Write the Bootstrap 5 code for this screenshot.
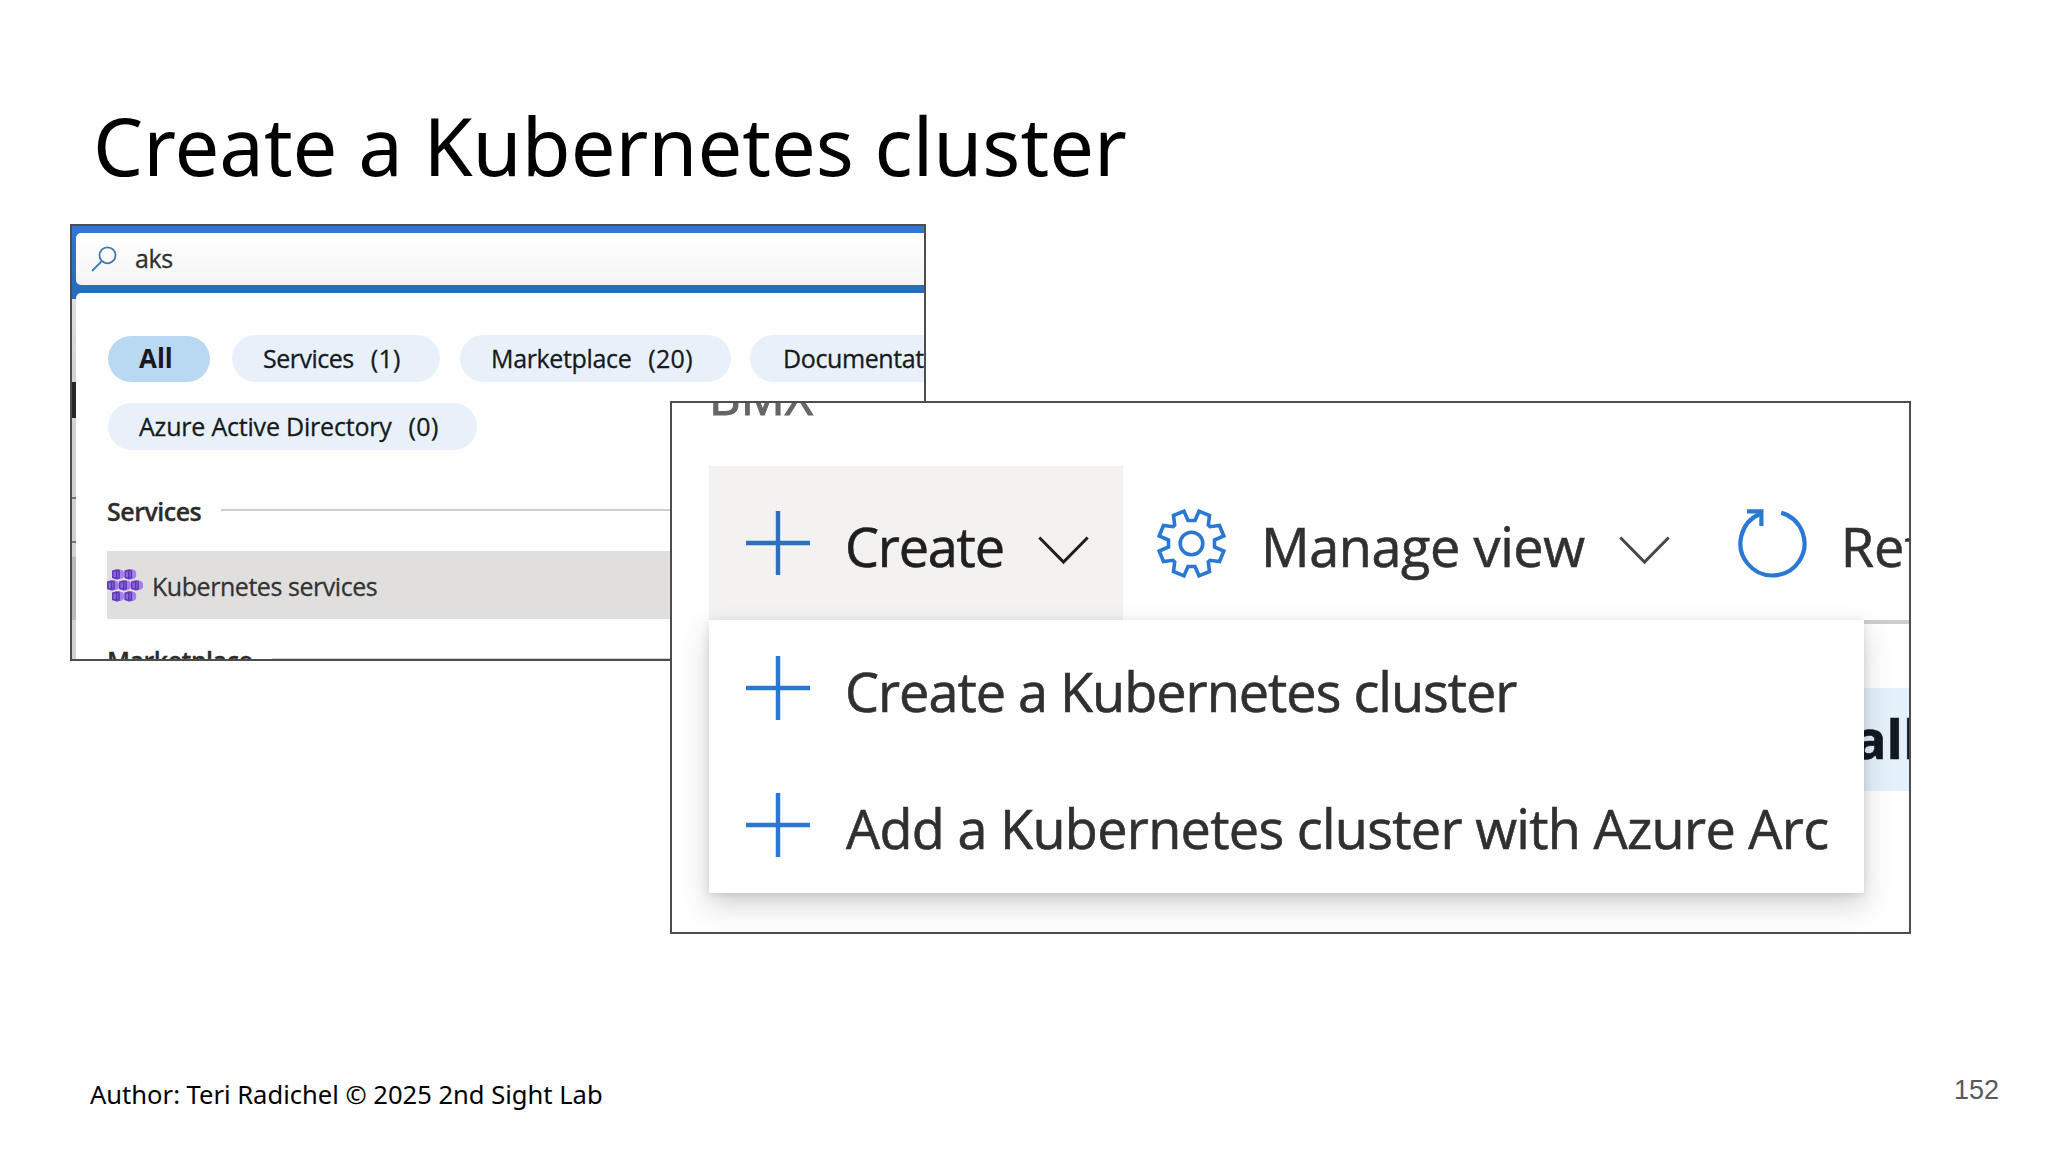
<!DOCTYPE html>
<html lang="en">
<head>
<meta charset="utf-8">
<title>Create a Kubernetes cluster</title>
<link rel="stylesheet" href="https://cdn.jsdelivr.net/npm/bootstrap@5.3.0/dist/css/bootstrap.min.css">
<style>
  body { background: #fefefe; }
  svg { display: block; flex: none; }
  .slide { width: 2048px; height: 1152px; padding: 95px 49px 0 90px; color: #000; font-family: "Noto Sans", sans-serif; }
  .slide-title { font-size: 79.5px; line-height: 100px; font-weight: 400; margin: 0 0 0 3px; white-space: nowrap; }
  .slide-foot { margin-top: 870px; font-size: 25.55px; line-height: 58px; }
  .slide-num { font: 27px/50px "Liberation Sans", sans-serif; color: #595959; }
  .shot { position: absolute; border: 2px solid #4d4d4d; background: #fefefe; font-family: "Open Sans", "Noto Sans", sans-serif; white-space: nowrap; overflow: hidden; }

  .shot-search { left: 70px; top: 224px; width: 856px; height: 437px; font-size: 25px; letter-spacing: -.4px; color: #17191c; -webkit-text-stroke: .3px; }
  .search-top { height: 67px; padding: 7px 0 0 4px; background: linear-gradient(#2e78cf, #286dbd); }
  .search-box { height: 52px; padding-left: 15px; background: linear-gradient(#fff, #f5f5f5); border-radius: 5px 0 0 5px; color: #2f2f2f; }
  .search-box span { margin-left: 18px; }
  .search-main { height: 368px; background: linear-gradient(#286dbd, #286dbd) 0 0 / 10px 6px no-repeat; }
  .page-edge { width: 4px; background: linear-gradient(transparent 6px, #e3dede 6px, #d3d1d1 89px, #262626 89px 125px, #d3d1d1 125px 204px, #777 204px 206px, #d3d1d1 206px 248px, #777 248px 250px, #d3d1d1 250px 264px, #b9b7b7 264px 327px, #d3d1d1 327px); }
  .results { border-radius: 5px 0 0 0; background: #fefefe; padding: 42px 0 0 32px; min-width: 0; }
  .pills { gap: 20px; }
  .pill { height: 47px; border-radius: 24px; background: #e8f1fa; padding-left: 31px; line-height: 46px; flex: none; }
  .pill b { font-weight: 400; letter-spacing: .3px; margin-left: 17px; }
  .pill-all { width: 102px; height: 46px; margin-right: 2px; background: #b9d8f2; font-size: 26px; font-weight: 700; letter-spacing: 0; line-height: 44px; -webkit-text-stroke: 0; }
  .pill-services { width: 208px; letter-spacing: -.5px; }
  .pill-market { width: 271px; margin-right: -1px; letter-spacing: -.35px; }
  .pill-docs { width: 300px; padding-left: 33px; }
  .pill-aad { width: 369px; margin-top: 21px; letter-spacing: -.2px; }
  .head-row { height: 34px; line-height: 34px; font-weight: 600; color: #2c2c2c; letter-spacing: -.5px; gap: 20px; margin-left: -1px; }
  .head-services { margin-top: 44px; }
  .rule { height: 2px; background: #cfcfcf; margin-bottom: 3px; }
  .hit { height: 68px; margin: 23px 0 24px -1px; background: #e0dfde; color: #333; letter-spacing: -.45px; }
  .hit span { margin: 4px 0 0 9px; }

  .shot-menu { left: 670px; top: 401px; width: 1241px; height: 533px; font-size: 54px; color: #303030; -webkit-text-stroke: .6px; }
  .crumb { height: 63px; padding-left: 37px; font-size: 49px; color: #666; line-height: 48px; -webkit-text-stroke: 1px; }
  .crumb span { margin-top: -31px; }
  .bar { height: 154px; padding-left: 37px; }
  .bar-btn { width: 414px; padding-left: 37px; background: #f3f2f1; color: #1f1f1f; flex: none; }
  .lbl { margin-top: 6px; line-height: 80px; letter-spacing: -1px; }
  .bar-btn .lbl { letter-spacing: -1.2px; margin-left: 35px; }
  .lbl-view { letter-spacing: -.4px; margin-left: 35px; }
  .lbl-ref { letter-spacing: 0; margin-left: 34px; }
  .chev { margin: 15px 0 0 34px; }
  .under { height: 4px; margin-left: 60px; background: #cdcdcd; }
  .tinted { height: 103px; margin: 64px 0 0 60px; padding-left: 1122px; background: #e4f0fa; font-weight: 700; color: #111820; line-height: 100px; }
  .drop { position: absolute; left: 37px; top: 217px; width: 1155px; height: 273px; padding-left: 37px; background: #fefefe; box-shadow: 0 12px 26px rgba(0,0,0,.17), 0 2px 8px rgba(0,0,0,.11); }
  .drop-row { height: 136.5px; gap: 35px; }
  .lbl-arc { letter-spacing: -.7px; padding-left: 1px; }
  .gear { margin-left: 34px; }
  .reload { margin-left: 68px; }
</style>
</head>
<body>
<svg width="0" height="0" class="position-absolute">
  <symbol id="plus" viewBox="0 0 64 64"><path d="M0 32H64M32 0V64" fill="none" stroke="currentColor" stroke-width="4.4"/></symbol>
  <symbol id="chevron" viewBox="0 0 51 29"><path d="M1.3 1.5L25.5 26L49.7 1.5" fill="none" stroke="currentColor" stroke-width="3"/></symbol>
  <symbol id="cube" viewBox="0 0 12 11"><path d="M4.5 .2L10.3 1L12 3.2V7.2L10.3 9.6L4.5 10.4L0 9V1.6Z" fill="#a97cf0"/><path d="M4.8 .2L8 .6V10L4.8 10.4L0 9V1.6Z" fill="#7c55d0"/><path d="M.9 2.4L4.4 1.6V9.2L.9 8.4Z" fill="#8c68dc" stroke="#47309a" stroke-width=".9"/><path d="M4.6 1.4L7.2 2V8.6L4.6 9.2" fill="none" stroke="#47309a" stroke-width=".7"/></symbol>
</svg>
<main class="slide position-relative overflow-hidden">
  <h1 class="slide-title">Create a Kubernetes cluster</h1>

  <section class="shot shot-search">
    <div class="search-top">
      <div class="search-box d-flex align-items-center">
        <svg width="26" height="26" viewBox="0 0 26 26" fill="none" stroke="#3b78b5" stroke-width="1.8"><circle cx="16.5" cy="9.3" r="8"/><path d="M10.8 15.2L1 25"/></svg>
        <span>aks</span>
      </div>
    </div>
    <div class="search-main d-flex">
      <div class="page-edge flex-shrink-0"></div>
      <div class="results flex-grow-1">
        <div class="pills d-flex align-items-center">
          <div class="pill pill-all">All</div>
          <div class="pill pill-services">Services<b>(1)</b></div>
          <div class="pill pill-market">Marketplace<b>(20)</b></div>
          <div class="pill pill-docs">Documentat</div>
        </div>
        <div class="pill pill-aad">Azure Active Directory<b>(0)</b></div>
        <div class="head-row head-services d-flex align-items-center"><span>Services</span><div class="rule flex-grow-1"></div></div>
        <div class="hit d-flex align-items-center">
          <svg width="36" height="33" viewBox="0 0 36 33">
            <use href="#cube" x="5" y="0" width="12" height="11"/><use href="#cube" x="17.3" y="0" width="12" height="11"/>
            <use href="#cube" x="0" y="11" width="12" height="11"/><use href="#cube" x="12" y="11" width="12" height="11"/><use href="#cube" x="24" y="11" width="12" height="11"/>
            <use href="#cube" x="5" y="22" width="12" height="11"/><use href="#cube" x="17.3" y="22" width="12" height="11"/>
          </svg>
          <span>Kubernetes services</span>
        </div>
        <div class="head-row d-flex align-items-center"><span>Marketplace</span><div class="rule flex-grow-1"></div></div>
      </div>
    </div>
  </section>

  <section class="shot shot-menu">
    <div class="crumb d-flex align-items-start"><span>BMX</span></div>
    <div class="bar d-flex align-items-center">
      <div class="bar-btn d-flex align-items-center h-100">
        <svg width="64" height="64" color="#2f70bd"><use href="#plus"/></svg>
        <span class="lbl">Create</span>
        <svg class="chev" width="51" height="29"><use href="#chevron"/></svg>
      </div>
      <svg class="gear" width="69" height="69" viewBox="-34.5 -34.5 69 69" fill="none" stroke="#2b78d2" stroke-width="3.6"><circle r="11.3"/><path d="M3.5-23L7.5-32.3L18-28L16.8-18.5L18.5-16.8L28-18L32.3-7.5L23-3.5V3.5L32.3 7.5L28 18L18.5 16.8L16.8 18.5L18 28L7.5 32.3L3.5 23H-3.5L-7.5 32.3L-18 28L-16.8 18.5L-18.5 16.8L-28 18L-32.3 7.5L-23 3.5V-3.5L-32.3-7.5L-28-18L-18.5-16.8L-16.8-18.5L-18-28L-7.5-32.3L-3.5-23Z"/></svg>
      <span class="lbl lbl-view">Manage view</span>
      <svg class="chev" width="51" height="29" color="#484848"><use href="#chevron"/></svg>
      <svg class="reload" width="69" height="69" viewBox="-34.5 -34.5 69 69" fill="none" stroke="#2b78d2" stroke-width="4.2"><path d="M8.7-30.8A32 32 0 1 1-12-29.7"/><path d="M-25.5-32.2H-11.1V-17.5"/></svg>
      <span class="lbl lbl-ref">Refresh</span>
    </div>
    <div class="under"></div>
    <div class="tinted">all</div>
    <div class="drop">
      <div class="drop-row d-flex align-items-center"><svg width="64" height="64" color="#2b78d2"><use href="#plus"/></svg><span class="lbl">Create a Kubernetes cluster</span></div>
      <div class="drop-row d-flex align-items-center"><svg width="64" height="64" color="#2b78d2"><use href="#plus"/></svg><span class="lbl lbl-arc">Add a Kubernetes cluster with Azure Arc</span></div>
    </div>
  </section>

  <footer class="slide-foot d-flex justify-content-between"><span>Author: Teri Radichel © 2025 2nd Sight Lab</span><span class="slide-num">152</span></footer>
</main>
<script src="https://cdn.jsdelivr.net/npm/bootstrap@5.3.0/dist/js/bootstrap.bundle.min.js"></script>
</body>
</html>
